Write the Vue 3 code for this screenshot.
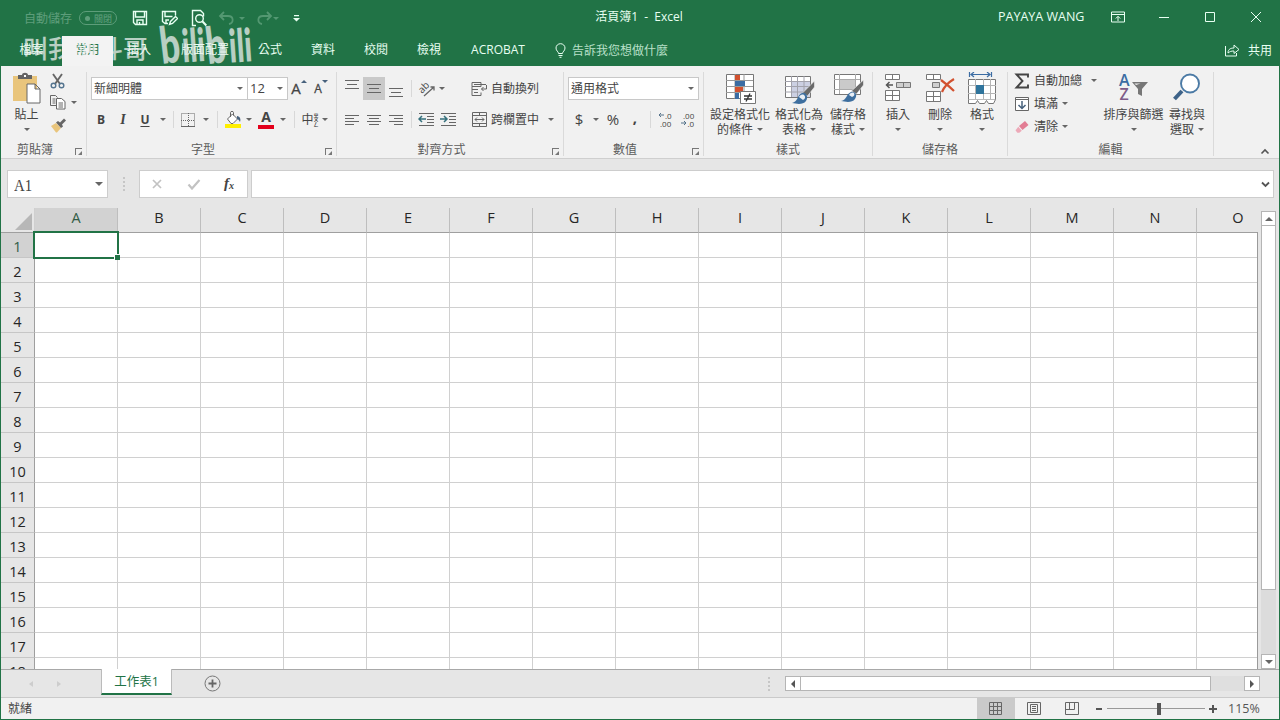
<template>
  <div class="window">
    <header class="title-bar">
      <div class="quick-access">
        <span class="autosave">自動儲存</span>
        <span class="toggle"><i></i>關閉</span>
        <span class="cell w28">
          <svg width="16" height="16" viewBox="0 0 16 16" class="line white bold-line">
            <path d="M1.500 1.500h13v13h-11l-2-2z M3.500 1.500v5.500h9v-5.500 M5 14.500v-4.500h6v4.500 M7.500 12v2" />
          </svg>
        </span>
        <span class="cell w31">
          <svg width="17" height="16" viewBox="0 0 17 16" class="line white bold-line">
            <path d="M7 13.500h-3l-2.500-2v-10h13v4 M4 1.500v5h7.500 M5 13v-3h3 M8.500 14.500l1-3 5-5 2 2-5 5z" />
          </svg>
        </span>
        <span class="cell w27">
          <svg width="16" height="18" viewBox="0 0 16 18" class="line white bold-line">
            <path d="M5 16.500h-3.500v-15h8l3 3v3" />
            <circle cx="8.500" cy="9.500" r="3.800" />
            <path d="M11.300 12.300l4 4.200" stroke-width="2" />
          </svg>
        </span>
        <span class="cell w30 dim">
          <svg width="18" height="14" viewBox="0 0 18 14" class="line pale">
            <path d="M6 1l-4 4 4 4 M2 5h8c6 0 6 7 1 8" stroke-width="1.800" />
          </svg>
        </span>
        <span class="cell dim w12"><i class="caret light"></i></span>
        <span class="cell w24 dim">
          <svg width="18" height="14" viewBox="0 0 18 14" class="line pale">
            <path d="M12 1l4 4-4 4 M16 5h-8c-6 0-6 7-1 8" stroke-width="1.800" />
          </svg>
        </span>
        <span class="cell dim w12"><i class="caret light"></i></span>
        <span class="cell w20">
          <svg width="7" height="7" viewBox="0 0 7 7"><path d="M1 0h5v1.200h-5z M0 3h7l-3.500 3.500z" fill="#e8fff2" /></svg>
        </span>
      </div>
      <div class="doc-title">活頁簿1&nbsp; -&nbsp; Excel</div>
      <div class="window-tools">
        <span class="user">PAYAYA WANG</span>
        <span class="cell w46">
          <svg width="14" height="12" viewBox="0 0 14 12" class="line white">
            <path d="M.5 1h13v10h-13z M.5 3.500h13 M7 10v-4.500 M4.800 7.500l2.200-2.200 2.200 2.200" />
          </svg>
        </span>
        <span class="cell w46"><svg width="12" height="12" class="line white"><path d="M1 6.500h10" /></svg></span>
        <span class="cell w46"><svg width="12" height="12" class="line white"><path d="M1.500 1.500h9v9h-9z" /></svg></span>
        <span class="cell w46"><svg width="12" height="12" class="line white"><path d="M1 1l10 10 M11 1l-10 10" /></svg></span>
      </div>
    </header>

    <nav class="tabs">
      <span
        v-for="tab in tabs"
        :key="tab.name"
        class="tab"
        :class="{ active: tab.active }"
        :style="{ width: `${tab.width}px` }"
      >{{ tab.name }}</span>
      <span class="tell-me">
        <svg width="11" height="15" viewBox="0 0 11 15" class="line white">
          <path d="M3.500 10.500c0-2-2.500-2.500-2.500-5.500a4.500 4.300 0 0 1 9 0c0 3-2.500 3.500-2.500 5.500z M3.500 12.500h4 M4.500 14.300h2" />
        </svg>
        告訴我您想做什麼
      </span>
      <span class="share">
        <svg width="16" height="14" viewBox="0 0 16 14" class="line white">
          <path d="M1.500 3v10h11v-3 M4 10c0-4 3-5 6-5v-3l5 4.500-5 4v-2.500c-3 0-4 .5-6 2z" />
        </svg>
        共用
      </span>
      <svg class="watermark" width="260" height="46" viewBox="0 0 260 46">
        <text x="22" y="33" font-size="25" font-weight="500" class="wm-name">叫我阿斗哥</text>
        <g class="wm-logo">
          <text x="161" y="38" font-size="51" textLength="20" lengthAdjust="spacingAndGlyphs" transform="rotate(-7 170 38)">b</text>
          <text x="182" y="37" font-size="46" textLength="23" lengthAdjust="spacingAndGlyphs" transform="rotate(-4 190 38)">ili</text>
          <text x="207" y="38" font-size="51" textLength="20" lengthAdjust="spacingAndGlyphs" transform="rotate(-7 217 38)">b</text>
          <text x="229" y="37" font-size="46" textLength="23" lengthAdjust="spacingAndGlyphs" transform="rotate(-4 240 38)">ili</text>
        </g>
      </svg>
    </nav>

    <section class="ribbon">
      <!-- Clipboard -->
      <div class="group g-clipboard">
        <div class="body">
          <div class="big">
            <span class="pic">
              <svg width="30" height="34" viewBox="0 0 30 34">
                <path d="M1 4h24v25h-24z" fill="#e9c57c" />
                <path d="M6 7v-4h4c0-3 6-3 6 0h4v4z" fill="#646464" />
                <path d="M12 3h2v2h-2z" fill="#fff" />
                <path d="M15 12h8l5 5v14h-13z M23 12v5h5" fill="#fff" stroke="#666" />
              </svg>
            </span>
            <span>貼上</span>
            <span><i class="caret"></i></span>
          </div>
          <div class="clip-side">
            <span class="side-row">
              <svg width="15" height="16" viewBox="0 0 15 16" class="line">
                <path d="M3 1l7 10 M12 1l-7 10" stroke-width="1.900" />
                <circle cx="3.500" cy="12.500" r="2.300" stroke="#54748f" stroke-width="1.400" />
                <circle cx="11.500" cy="12.500" r="2.300" stroke="#54748f" stroke-width="1.400" />
              </svg>
            </span>
            <span class="side-row">
              <svg width="16" height="15" viewBox="0 0 16 15" class="line">
                <path d="M6 10.500h-5.500v-10h5l2 2 M2.500 4h3 M2.500 6h3 M2.500 8h3" />
                <path d="M6.500 3.500h5l3.500 3v7.500h-8.500z M8.500 8h4.500 M8.500 10h4.500 M8.500 12h4.500" fill="#fff" />
              </svg>
              <i class="caret"></i>
            </span>
            <span class="side-row">
              <svg width="17" height="15" viewBox="0 0 17 15">
                <path d="M1 8l5-3 5 5-4 4.500h-1z" fill="#e9c57c" />
                <path d="M6 4.500l2-1.500 2 1.500 4-4 2 2-4 4 1 2-2 1.500z" fill="#666" />
              </svg>
            </span>
          </div>
        </div>
        <div class="label"><span>剪貼簿</span><i class="launcher"></i></div>
      </div>

      <!-- Font -->
      <div class="group g-font">
        <div class="body stack">
          <div class="row">
            <span class="select font-name">新細明體<i class="caret"></i></span>
            <span class="select font-size">12<i class="caret"></i></span>
            <span class="cell w22 grow-a">A<svg width="6" height="3"><path d="M0 3h6l-3-3z" fill="#47617c" /></svg></span>
            <span class="cell w22 grow-a small">A<svg width="6" height="3"><path d="M0 0h6l-3 3z" fill="#47617c" /></svg></span>
          </div>
          <div class="row">
            <span class="cell w22 letter bold">B</span>
            <span class="cell w22 letter italic">I</span>
            <span class="cell w22 letter under">U</span>
            <span class="cell w14"><i class="caret"></i></span>
            <span class="cell w6"><i class="sep"></i></span>
            <span class="cell w24">
              <svg width="14" height="14" viewBox="0 0 14 14" class="line">
                <path d="M.5 .5h13v13h-13z M7.500 0v13 M0 7.500h13" stroke-dasharray="1 1" /><path d="M0 13.500h14" />
              </svg>
            </span>
            <span class="cell w12"><i class="caret"></i></span>
            <span class="cell w10"><i class="sep"></i></span>
            <span class="cell w22">
              <svg width="17" height="17" viewBox="0 0 17 17">
                <path d="M2.500 8l5-5 5 5-4.500 4.500h-2z" fill="#fff" stroke="#666" />
                <path d="M5.500 6v-4.500c0-1.500 3-1.500 3 0v3" fill="none" stroke="#666" />
                <path d="M12 5c3 .5 4 3 3 6-1-2-2-3-3-3z" fill="#47617c" />
                <path d="M0 13h16v4h-16z" fill="#ffef00" />
              </svg>
            </span>
            <span class="cell w10"><i class="caret"></i></span>
            <span class="cell w24 letter font-color">A</span>
            <span class="cell w10"><i class="caret"></i></span>
            <span class="cell w12"><i class="sep"></i></span>
            <span class="cell w20 phonetic">中<small>ㄓ<br>ㄨ<br>ㄥ</small></span>
            <span class="cell w10"><i class="caret"></i></span>
          </div>
        </div>
        <div class="label"><span>字型</span><i class="launcher"></i></div>
      </div>

      <!-- Alignment -->
      <div class="group g-align">
        <div class="body stack">
          <div class="row">
            <span v-for="v in vertical" :key="v.name" class="cell w22 valign" :class="[v.name, { pressed: v.pressed }]">
              <svg width="14" height="10" class="line"><path :d="v.path" /></svg>
            </span>
            <span class="cell w8"><i class="sep"></i></span>
            <span class="cell w23">
              <svg width="18" height="17" viewBox="0 0 18 17" class="orient">
                <text x="1" y="11" transform="rotate(-45 6 9)">ab</text>
                <path d="M6 16l10-9 M12.500 7h3.500v3.500" />
              </svg>
            </span>
            <span class="cell w8"><i class="caret"></i></span>
            <span class="text-btn after-orient">
              <svg width="17" height="16" viewBox="0 0 17 16" class="line">
                <path d="M1 1.500h9v4h-9z M1 5.500v9h9v-3 M3 3.500h9 M1 8.500h6 M3 11.500h4 M15.500 4v4h-5 M12.500 6l-2 2 2 2 M10 3.500h5" />
              </svg>
              自動換列
            </span>
          </div>
          <div class="row">
            <span v-for="(path, i) in horizontal" :key="i" class="cell w22">
              <svg width="14" height="12" class="line"><path :d="path" /></svg>
            </span>
            <span class="cell w8"><i class="sep"></i></span>
            <span class="cell w23">
              <svg width="17" height="13" viewBox="0 0 17 13" class="line">
                <path d="M1 .5h15 M9 3.500h7 M9 6.500h7 M9 9.500h7 M1 12.500h15" />
                <path d="M1 6h7 M4 3l-3 3 3 3" stroke="#35707c" stroke-width="1.500" />
              </svg>
            </span>
            <span class="cell w21">
              <svg width="17" height="13" viewBox="0 0 17 13" class="line">
                <path d="M1 .5h15 M9 3.500h7 M9 6.500h7 M9 9.500h7 M1 12.500h15" />
                <path d="M0 6h7 M4 3l3 3-3 3" stroke="#35707c" stroke-width="1.500" />
              </svg>
            </span>
            <span class="text-btn after-indent">
              <svg width="17" height="15" viewBox="0 0 17 15" class="line">
                <path d="M1.500 .5h14v14h-14z M1.500 3.500h14 M1.500 11.500h14 M8.500 .5v3 M8.500 11.500v3 M4 7.500h9 M6 5.500l-2 2 2 2 M11 5.500l2 2-2 2" />
              </svg>
              跨欄置中
            </span>
            <span class="cell w24"><i class="caret"></i></span>
          </div>
        </div>
        <div class="label"><span>對齊方式</span><i class="launcher"></i></div>
      </div>

      <!-- Number -->
      <div class="group g-number">
        <div class="body stack">
          <div class="row"><span class="select number-format">通用格式<i class="caret"></i></span></div>
          <div class="row">
            <span class="cell w22 symbol">$</span>
            <span class="cell w12"><i class="caret"></i></span>
            <span class="cell w22 symbol">%</span>
            <span class="cell w22 symbol comma">,</span>
            <span class="cell w8"><i class="sep"></i></span>
            <span class="cell w23">
              <svg width="18" height="15" viewBox="0 0 18 15" class="decimals">
                <text x="8" y="6.500">.0</text><text x="3" y="14.500">.00</text>
                <path d="M2 3h5 M4 1l-2 2 2 2" />
              </svg>
            </span>
            <span class="cell w22">
              <svg width="18" height="15" viewBox="0 0 18 15" class="decimals">
                <text x="4" y="6.500">.00</text><text x="8.500" y="14.500">.0</text>
                <path d="M2 11h5 M5 9l2 2-2 2" />
              </svg>
            </span>
          </div>
        </div>
        <div class="label"><span>數值</span><i class="launcher"></i></div>
      </div>

      <!-- Styles -->
      <div class="group g-styles">
        <div class="body">
          <div class="big w62">
            <span class="pic">
              <svg width="32" height="34" viewBox="0 0 32 34">
                <path d="M2.500 2.500h27v24h-27z" fill="#fff" stroke="#777" />
                <path d="M11 2v25 M20 2v25 M2 8.500h27 M2 14.500h27 M2 20.500h27" stroke="#999" fill="none" />
                <path d="M11 3h5v5h-5z M11 15h8v5h-8z" fill="#d2512f" />
                <path d="M11 9h10v5h-10z M11 21h4v6h-4z" fill="#3b6ca3" />
                <path d="M16.500 19.500h15v12h-15z" fill="#fff" stroke="#777" />
                <path d="M20 24h8 M20 27h8 M26 21.500l-4 8" stroke="#333" stroke-width="1.300" />
              </svg>
            </span>
            <span>設定格式化</span>
            <span>的條件<i class="caret"></i></span>
          </div>
          <div class="big w56">
            <span class="pic">
              <svg width="32" height="34" viewBox="0 0 32 34">
                <path d="M2.500 4.500h25v21h-25z" fill="#fff" stroke="#777" />
                <path d="M9 10h18v15h-18z" fill="#ccd0e3" />
                <path d="M8.500 4v21 M14.500 4v21 M21 4v21 M2 9.500h25 M2 14.500h25 M2 20h25" stroke="#a2a2ac" fill="none" />
                <path d="M31.500 9l-12 12 5 3 7-9z" fill="#6a6a6a" stroke="#f1f1f1" stroke-width=".6" />
                <path d="M9 31c6-1 5-8 10-10 4-1 7 4 4 8s-9 3-14 2z" fill="#3e6f9f" />
                <path d="M16 25c1-2 3-3 5-2 2 2 1 4-1 5z" fill="#e8eef5" />
              </svg>
            </span>
            <span>格式化為</span>
            <span>表格<i class="caret"></i></span>
          </div>
          <div class="big w42">
            <span class="pic">
              <svg width="32" height="34" viewBox="0 0 32 34">
                <path d="M2.500 2.500h26v20h-26z" fill="#fff" stroke="#777" />
                <path d="M7.500 2v20 M23.500 2v20 M2 7.500h26 M2 17.500h26" stroke="#aaa" fill="none" />
                <path d="M8 8h15v9h-15z" fill="#cacaca" />
                <path d="M31.500 8l-12 11 5 3 7-9z" fill="#6a6a6a" stroke="#f1f1f1" stroke-width=".6" />
                <path d="M9 29c6-1 5-7 10-9 4-1 7 3 4 7s-9 3-14 2z" fill="#3e6f9f" />
                <path d="M17 23c1-2 3-3 5-2 1 2 0 3-2 4z" fill="#e8eef5" />
              </svg>
            </span>
            <span>儲存格</span>
            <span>樣式<i class="caret"></i></span>
          </div>
        </div>
        <div class="label"><span>樣式</span></div>
      </div>

      <!-- Cells -->
      <div class="group g-cells">
        <div class="body">
          <div class="big w42">
            <span class="pic">
              <svg width="28" height="34" viewBox="0 0 28 34">
                <path d="M1.500 2.500h14v5h-14z M8.500 2.500v5 M1.500 18.500h14v10h-14z M8.500 18.500v10 M1.500 23.500h14" fill="#fff" stroke="#777" />
                <path d="M12.500 10.500h14v5h-14z M19.500 10.500v5" fill="#cfcfcf" stroke="#777" />
                <path d="M2 13h7 M5.500 10l-3 3 3 3" fill="none" stroke="#555" stroke-width="1.500" />
              </svg>
            </span>
            <span>插入</span>
            <span><i class="caret"></i></span>
          </div>
          <div class="big w42">
            <span class="pic">
              <svg width="30" height="34" viewBox="0 0 30 34">
                <path d="M1.500 2.500h14v5h-14z M8.500 2.500v5 M1.500 19.500h14v10h-14z M8.500 19.500v10 M1.500 24.500h14" fill="#fff" stroke="#777" />
                <path d="M7.500 10.500h7v5h-7z" fill="#cfcfcf" stroke="#777" />
                <path d="M16 8c4 3 10 8 13 11 M29 7c-5 3-10 8-12 13" fill="none" stroke="#d2512f" stroke-width="2.200" />
              </svg>
            </span>
            <span>刪除</span>
            <span><i class="caret"></i></span>
          </div>
          <div class="big w42">
            <span class="pic">
              <svg width="30" height="34" viewBox="0 0 30 34">
                <path d="M2.500 0v5 M24.500 0v5 M4 2.500h19 M7 0l-3 2.500 3 2.500 M20 0l3 2.500-3 2.500" fill="none" stroke="#3b6ca3" stroke-width="1.200" />
                <path d="M1.500 7.500h27v20h-27z" fill="#fff" stroke="#777" />
                <path d="M8.500 7v20 M16.500 7v20 M23.500 7v20 M1 13.500h28 M1 21.500h28" fill="none" stroke="#b5b5b5" />
                <path d="M9 13h8v9h-8z" fill="#2f749c" />
                <path d="M1.500 27.500v4h7l2-3 2 3h5l2-3 2 3h5l2-4" fill="#fff" stroke="#777" />
              </svg>
            </span>
            <span>格式</span>
            <span><i class="caret"></i></span>
          </div>
        </div>
        <div class="label"><span>儲存格</span></div>
      </div>

      <!-- Editing -->
      <div class="group g-edit">
        <div class="body">
          <div class="edit-list">
            <span class="text-btn">
              <svg width="16" height="16" viewBox="0 0 16 16"><path d="M14 4.500v-3h-11.500l6 6.500-6 6.500h11.500v-3" fill="none" stroke="#444" stroke-width="1.900" /></svg>
              自動加總<i class="caret far"></i>
            </span>
            <span class="text-btn">
              <svg width="16" height="16" viewBox="0 0 16 16" class="line">
                <path d="M1.500 1.500h13v13h-13z M1.500 3.500h13" fill="#fff" />
                <path d="M8 5v7.500 M4.500 9l3.500 3.500 3.500-3.500" stroke="#47617c" stroke-width="1.500" />
              </svg>
              填滿<i class="caret"></i>
            </span>
            <span class="text-btn">
              <svg width="16" height="16" viewBox="0 0 16 16">
                <path d="M5 7l6-5 3.500 4-6 5z" fill="#e27d94" /><path d="M4.300 7.800l3.500 4-2.500 2h-2l-1.800-2.500z" fill="#eda9b8" />
              </svg>
              清除<i class="caret"></i>
            </span>
          </div>
          <div class="big w66">
            <span class="pic">
              <svg width="32" height="34" viewBox="0 0 32 34" class="sort">
                <text x="1" y="14" fill="#3b6ca3">A</text>
                <text x="1.500" y="28" fill="#7d5b88">Z</text>
                <path d="M14 10h16l-6 7v7l-4-2v-5z" fill="#777" />
                <path d="M16.500 11.500h6l-4.500 1.500z" fill="#eee" />
              </svg>
            </span>
            <span>排序與篩選</span>
            <span><i class="caret"></i></span>
          </div>
          <div class="big w42">
            <span class="pic">
              <svg width="30" height="34" viewBox="0 0 30 34">
                <path d="M10 19l-7.500 8" stroke="#3e6389" stroke-width="4" />
                <circle cx="18" cy="11.500" r="9" fill="#fff" stroke="#4b7aa5" stroke-width="1.900" />
              </svg>
            </span>
            <span>尋找與</span>
            <span>選取<i class="caret"></i></span>
          </div>
        </div>
        <div class="label"><span>編輯</span></div>
      </div>
      <svg class="collapse" width="10" height="7"><path d="M1.500 5.500l3.500-3.500 3.500 3.500" fill="none" stroke="#555" stroke-width="1.600" /></svg>
    </section>

    <section class="formula-row">
      <div class="name-box"><span>A1</span><i class="caret wide"></i></div>
      <div class="dots"><i v-for="n in 4" :key="n"></i></div>
      <div class="fx-box">
        <svg width="12" height="12" class="line"><path d="M2 2l8 8 M10 2l-8 8" stroke="#c2c2c2" stroke-width="1.700" /></svg>
        <svg width="14" height="12" class="line"><path d="M1.500 6.500l3.500 4 7.500-8.500" stroke="#c2c2c2" stroke-width="2.200" /></svg>
        <span class="fx">f<sub>x</sub></span>
      </div>
      <div class="formula-input">
        <svg width="9" height="7"><path d="M1 1.500l3.500 3.500 3.500-3.500" fill="none" stroke="#555" stroke-width="1.800" /></svg>
      </div>
    </section>

    <main class="sheet-area">
      <div class="sheet">
        <div class="col-heads">
          <div class="corner"><svg width="17" height="17"><path d="M17 0v17h-17z" fill="#b7b7b7" /></svg></div>
          <div v-for="c in columns" :key="c" class="col-head" :class="{ selected: c === 'A' }">{{ c }}</div>
        </div>
        <div v-for="r in 18" :key="r" class="grid-row">
          <div class="row-head" :class="{ selected: r === 1 }">{{ r }}</div>
          <div v-for="c in columns" :key="c" class="grid-cell"></div>
        </div>
        <div class="selection"><i></i></div>
      </div>
      <div class="v-scroll">
        <span class="arrow-btn"><svg width="8" height="4"><path d="M0 4h8l-4-4z" fill="#666" /></svg></span>
        <span class="v-thumb"></span>
        <span class="arrow-btn"><svg width="8" height="4"><path d="M0 0h8l-4 4z" fill="#666" /></svg></span>
      </div>
    </main>

    <section class="sheet-bar">
      <div class="sheet-nav">
        <svg width="4" height="6"><path d="M4 0v6l-4-3z" fill="#cdcdcd" /></svg>
        <svg width="4" height="6"><path d="M0 0v6l4-3z" fill="#cdcdcd" /></svg>
      </div>
      <div class="sheet-tab">工作表1</div>
      <svg class="add-sheet" width="17" height="17" viewBox="0 0 17 17">
        <circle cx="8.500" cy="8.500" r="7.500" fill="none" stroke="#777" />
        <path d="M8.500 4.500v8 M4.500 8.500h8" stroke="#666" stroke-width="1.800" />
      </svg>
      <div class="dots low"><i v-for="n in 4" :key="n"></i></div>
      <div class="h-scroll">
        <span class="h-arrow"><svg width="4" height="8"><path d="M4 0v8l-4-4z" fill="#555" /></svg></span>
        <span class="h-thumb"></span>
        <span class="h-arrow"><svg width="4" height="8"><path d="M0 0v8l4-4z" fill="#555" /></svg></span>
      </div>
    </section>

    <footer class="status-bar">
      <span class="ready">就緒</span>
      <span class="view on">
        <svg width="14" height="14" class="line"><path d="M.5 .5h12v12h-12z M4.500 .5v12 M8.500 .5v12 M.5 4.500h12 M.5 8.500h12" /></svg>
      </span>
      <span class="view">
        <svg width="14" height="14" class="line"><path d="M.5 .5h13v12h-13z M3.500 2.500h7v8h-7z M5 4.500h4 M5 6.500h4 M5 8.500h4" /></svg>
      </span>
      <span class="view">
        <svg width="14" height="14" class="line"><path d="M.5 .5h13v12h-13z M4.500 .5v7 M9.500 .5v7 M.5 7.500h9" /></svg>
      </span>
      <span class="zoom">
        <svg width="8" height="8"><path d="M1 4h6" stroke="#555" stroke-width="2" /></svg>
        <span class="slider"><i></i></span>
        <svg width="8" height="8"><path d="M0 4h8 M4 0v8" stroke="#555" stroke-width="2" /></svg>
        <span class="percent">115%</span>
      </span>
    </footer>
  </div>
</template>

<script setup>
const tabs = [
  { name: '檔案', width: 61 },
  { name: '常用', width: 51, active: true },
  { name: '插入', width: 52 },
  { name: '版面配置', width: 80 },
  { name: '公式', width: 50 },
  { name: '資料', width: 56 },
  { name: '校閱', width: 50 },
  { name: '檢視', width: 56 },
  { name: 'ACROBAT', width: 82 }
]

const columns = 'ABCDEFGHIJKLMNO'.split('')

const vertical = [
  { name: 'top', path: 'M0 .5h14 M2 4.500h10 M0 8.500h14' },
  { name: 'middle', path: 'M0 .5h14 M2 4.500h10 M0 8.500h14', pressed: true },
  { name: 'bottom', path: 'M0 .5h14 M2 4.500h10 M0 8.500h14' }
]

const horizontal = [
  'M0 1.500h14 M0 4.500h9 M0 7.500h14 M0 10.500h9',
  'M0 1.500h14 M2 4.500h10 M0 7.500h14 M2 10.500h10',
  'M0 1.500h14 M5 4.500h9 M0 7.500h14 M5 10.500h9'
]
</script>

<style>
body {
  margin: 0;
  overflow: hidden;
}
</style>

<style scoped>
.window {
  width: 1280px;
  height: 720px;
  box-sizing: border-box;
  border: solid #217346;
  border-width: 0 1px 1px;
  display: flex;
  flex-direction: column;
  overflow: hidden;
  background: #e6e6e6;
  color: #444;
  font: 12px/15px "Open Sans", "Noto Sans CJK TC", sans-serif;
  white-space: nowrap;
}

svg { display: block; flex: none; }
.line { fill: none; stroke: #666; }
.line.white { stroke: #e8fff2; }
.line.pale { stroke: #9fcfb3; }
.bold-line { stroke-width: 1.4; }

.cell {
  display: flex;
  align-items: center;
  justify-content: center;
  flex: none;
}
.w6 { width: 6px; }
.w8 { width: 8px; }
.w10 { width: 10px; }
.w12 { width: 12px; }
.w14 { width: 14px; }
.w20 { width: 20px; }
.w21 { width: 21px; }
.w22 { width: 22px; }
.w23 { width: 23px; }
.w24 { width: 24px; }
.w27 { width: 27px; }
.w28 { width: 28px; }
.w30 { width: 30px; }
.w31 { width: 31px; }
.w42 { width: 42px; }
.w46 { width: 46px; }
.w56 { width: 56px; }
.w62 { width: 62px; }
.w66 { width: 66px; }

.caret {
  display: inline-block;
  flex: none;
  border: solid transparent;
  border-width: 3px 3px 0;
  border-top-color: #666;
}
.caret.light { border-top-color: #9fcfb3; }
.caret.wide { border-width: 4px 4px 0; }

/* title bar and tabs */
.title-bar {
  flex: none;
  height: 33px;
  display: flex;
  align-items: center;
  background: #217346;
  color: #e8fff2;
}
.quick-access {
  width: 559px;
  display: flex;
  align-items: center;
  padding: 3px 0 0 23px;
  box-sizing: border-box;
}
.autosave { width: 55px; opacity: 0.3; }
.toggle {
  width: 38px;
  height: 14px;
  margin-right: 9px;
  box-sizing: border-box;
  display: flex;
  align-items: center;
  gap: 4px;
  padding-left: 5px;
  border: 1px solid;
  border-radius: 8px;
  font-size: 9px;
  opacity: 0.3;
}
.toggle i { width: 5px; height: 5px; border-radius: 50%; background: currentColor; }
.dim { opacity: 0.4; }
.dim.w12 { margin-left: -6px; margin-right: 4px; }
.doc-title { width: 158px; text-align: center; }
.window-tools {
  margin-left: auto;
  display: flex;
  align-items: center;
}
.user { width: 97px; font-size: 12.500px; }

.tabs {
  flex: none;
  position: relative;
  height: 33px;
  display: flex;
  background: #217346;
  color: #e8fff2;
}
.tab {
  flex: none;
  height: 30px;
  margin-top: 3px;
  line-height: 28px;
  text-align: center;
}
.tab.active { background: #f3f3f3; color: #217346; }
.tell-me,
.share {
  display: flex;
  align-items: center;
  gap: 6px;
}
.tell-me { margin-left: 16px; padding-top: 1px; color: #b9e0c9; }
.share { margin-left: auto; margin-right: 7px; padding-top: 1px; gap: 8px; }
.watermark {
  position: absolute;
  left: 0;
  top: -8px;
  overflow: visible;
  fill: #f3f3f3;
  opacity: 0.72;
}
.wm-name { font-family: "Noto Sans CJK TC", sans-serif; }
.wm-logo { font-family: Lato, sans-serif; font-weight: 900; }

/* ribbon */
.ribbon {
  flex: none;
  position: relative;
  height: 93px;
  box-sizing: border-box;
  padding-top: 6px;
  display: flex;
  background: #f1f1f1;
  border-bottom: 1px solid #cfcfcf;
}
.group {
  flex: none;
  height: 84px;
  box-sizing: border-box;
  display: flex;
  flex-direction: column;
  border-right: 1px solid #dadada;
}
.g-clipboard { width: 86px; }
.g-font { width: 250px; }
.g-align { width: 227px; }
.g-number { width: 140px; }
.g-styles { width: 169px; }
.g-cells { width: 135px; }
.g-edit { width: 206px; }
.body { height: 70px; flex: none; display: flex; padding-left: 4px; }
.g-clipboard .body { padding-left: 5px; }
.g-styles .body { padding-left: 5px; }
.g-font .body { padding-left: 3px; }
.stack { flex-direction: column; padding-top: 5px; box-sizing: border-box; gap: 8px; }
.row { display: flex; height: 23px; align-items: center; }
.label { height: 15px; display: flex; align-items: center; color: #5c5c5c; }
.label span { flex: 1; text-align: center; }
.launcher {
  width: 7px;
  height: 7px;
  margin: 3px 4px 0 6px;
  box-sizing: border-box;
  border: solid #777;
  border-width: 1px 0 0 1px;
  position: relative;
}
.launcher::before {
  content: '';
  position: absolute;
  right: 0;
  bottom: 0;
  border: 2px solid #777;
  border-left-color: transparent;
  border-top-color: transparent;
}
.big {
  flex: none;
  display: flex;
  flex-direction: column;
  align-items: center;
}
.big > span { height: 15px; display: flex; align-items: center; gap: 4px; }
.big > .pic { height: 35px; align-items: flex-start; }
.g-clipboard .big { width: 41px; }
.clip-side { display: flex; flex-direction: column; }
.side-row { display: flex; height: 23px; align-items: center; gap: 5px; }
.side-row:first-child { height: 17px; }
.side-row svg { margin-left: 3px; }
.side-row:nth-child(2) { height: 27px; }
.side-row:nth-child(3) { height: 19px; }

.select {
  height: 23px;
  box-sizing: border-box;
  padding: 0 4px 0 2px;
  display: flex;
  align-items: center;
  justify-content: space-between;
  background: #fff;
  border: 1px solid #c8c8c8;
}
.font-name { width: 157px; margin-left: 1px; }
.font-size { width: 41px; margin-left: -1px; font-size: 13px; }
.number-format { width: 131px; }
.grow-a { align-items: flex-start; font-size: 15px; -webkit-text-stroke: 0.3px; }
.grow-a.small { font-size: 12px; }
.grow-a svg { margin-top: -1px; }
.letter { font-weight: 700; font-size: 12px; }
.letter.italic { font-family: "Liberation Serif", serif; font-style: italic; font-size: 14px; }
.letter.under { text-decoration: underline; text-underline-offset: 2px; }
.font-color { position: relative; font-size: 14px; height: 21px; align-items: flex-start; }
.font-color::after {
  content: '';
  position: absolute;
  left: 4px;
  right: 4px;
  bottom: 1px;
  height: 4px;
  background: #e3001b;
}
.sep { width: 1px; height: 17px; background: #d8d8d8; }
.phonetic small { font-size: 5px; line-height: 4.500px; font-weight: 700; }
.valign { height: 23px; }
.valign.top svg { margin-top: -7px; }
.valign.bottom svg { margin-top: 8px; }
.pressed { background: #c9c9c9; }
.orient text { font-size: 10px; fill: #444; }
.orient path { fill: none; stroke: #666; stroke-width: 1.3; }
.text-btn { display: flex; align-items: center; gap: 3px; }
.after-orient { margin-left: 25px; }
.after-indent { margin-left: 12px; }
.symbol { font-size: 15px; }
.symbol.comma { font-weight: 700; padding-bottom: 5px; box-sizing: border-box; }
.decimals { font-size: 8px; fill: #444; }
.decimals path { fill: none; stroke: #55728a; }
.edit-list { width: 87px; display: flex; flex-direction: column; padding-left: 2px; }
.edit-list .text-btn { height: 23px; gap: 4px; }
.edit-list .text-btn:first-child { height: 17px; margin-bottom: 3px; }
.far { margin-left: 5px; }
.sort { font-size: 16px; font-weight: 700; }
.sort text { font-weight: 600; }
.g-edit .w66 { width: 65px; }
.collapse { position: absolute; right: 9px; bottom: 3px; }

/* formula bar */
.formula-row {
  flex: none;
  height: 49px;
  box-sizing: border-box;
  padding: 11px 5px 10px 6px;
  display: flex;
}
.name-box,
.fx-box,
.formula-input {
  box-sizing: border-box;
  background: #fff;
  border: 1px solid #cdcdcd;
  display: flex;
  align-items: center;
}
.name-box { width: 101px; justify-content: space-between; padding: 0 4px 0 6px; }
.name-box span {
  font: 17px "Liberation Serif", serif;
  transform: scaleX(0.87);
  transform-origin: left;
  padding-top: 3px;
}
.dots { width: 31px; display: flex; flex-direction: column; align-items: center; justify-content: center; gap: 2px; }
.dots i { width: 2px; height: 2px; background: #c6c6c6; }
.fx-box { width: 109px; justify-content: space-between; padding: 0 13px 0 11px; }
.fx { font: italic 700 15px/16px "Liberation Serif", serif; }
.fx sub { font-size: 10px; vertical-align: -1px; }
.formula-input { flex: 1; margin-left: 3px; justify-content: flex-end; padding-right: 3px; }

/* grid */
.sheet-area { flex: none; height: 461px; display: flex; }
.sheet { width: 1257px; position: relative; overflow: hidden; font-size: 14.500px; color: #262626; }
.sheet::after {
  content: '';
  position: absolute;
  top: 24px;
  right: 0;
  bottom: 0;
  border-right: 1px solid #9a9a9a;
}
.col-heads { display: flex; height: 25px; width: 1279px; }
.corner,
.row-head {
  flex: none;
  width: 34px;
  box-sizing: border-box;
  border-right: 1px solid #9f9f9f;
}
.corner { border-bottom: 1px solid #9f9f9f; padding: 5px 0 0 14px; border-right-color: #cfcfcf; }
.col-head {
  flex: none;
  width: 83px;
  box-sizing: border-box;
  border-right: 1px solid #bebebe;
  border-bottom: 1px solid #9f9f9f;
  text-align: center;
  line-height: 20px;
}
.col-head.selected { background: #d2d2d2; color: #315c46; }
.grid-row { display: flex; height: 25px; width: 1279px; }
.row-head {
  border-bottom: 1px solid #c6c6c6;
  text-align: center;
  line-height: 27px;
}
.row-head.selected { background: #d2d2d2; color: #315c46; }
.grid-cell {
  flex: none;
  width: 83px;
  box-sizing: border-box;
  background: #fff;
  border: solid #d0d0d0;
  border-width: 0 1px 1px 0;
}
.selection {
  position: absolute;
  left: 32px;
  top: 23px;
  width: 86px;
  height: 28px;
  box-sizing: border-box;
  border: 2px solid #217346;
}
.selection i {
  position: absolute;
  right: -3px;
  bottom: -3px;
  width: 5px;
  height: 5px;
  background: #217346;
  border: solid #fff;
  border-width: 1px 0 0 1px;
}
.v-scroll {
  width: 15px;
  margin: 3px 0 0 3px;
  display: flex;
  flex-direction: column;
  background: #dcdcdc;
}
.arrow-btn,
.h-arrow,
.v-thumb,
.h-thumb {
  flex: none;
  box-sizing: border-box;
  background: #fff;
  border: 1px solid #b5b5b5;
}
.arrow-btn,
.h-arrow { display: flex; align-items: center; justify-content: center; }
.arrow-btn { height: 15px; }
.v-thumb { height: 365px; margin-top: -1px; margin-bottom: auto; }

/* sheet tabs */
.sheet-bar {
  flex: none;
  height: 28px;
  box-sizing: border-box;
  border-top: 1px solid #a8a8a8;
  display: flex;
}
.sheet-nav { width: 100px; display: flex; align-items: center; gap: 24px; padding-left: 28px; box-sizing: border-box; }
.sheet-tab {
  width: 71px;
  height: 26px;
  margin-top: -1px;
  box-sizing: border-box;
  background: #fff;
  color: #217346;
  font-size: 12.500px;
  text-align: center;
  line-height: 25px;
  border: solid #bbb;
  border-width: 0 1px;
  border-bottom: 2px solid #217346;
}
.add-sheet { margin: 5px 0 0 32px; }
.dots.low { margin-left: auto; width: 32px; }
.h-scroll { width: 475px; margin: 6px 19px 6px 0; display: flex; background: #dfdfdf; }
.h-arrow { width: 16px; }
.h-thumb { width: 411px; margin-left: -1px; margin-right: auto; }

/* status bar */
.status-bar {
  flex: 1;
  display: flex;
  align-items: center;
  background: #f1f1f1;
  border-top: 1px solid #cacaca;
}
.ready { padding-left: 7px; flex: 1; }
.view { width: 38px; align-self: stretch; display: flex; align-items: center; justify-content: center; }
.view.on { background: #cacaca; }
.zoom { display: flex; align-items: center; width: 188px; box-sizing: border-box; padding-left: 4px; }
.slider { width: 98px; height: 1px; background: #999; margin: 0 4px 0 4px; display: flex; align-items: center; }
.slider i { width: 4px; height: 12px; margin-left: 50px; background: #555; }
.percent { margin-left: 11px; font-size: 12.500px; color: #555; }
</style>
